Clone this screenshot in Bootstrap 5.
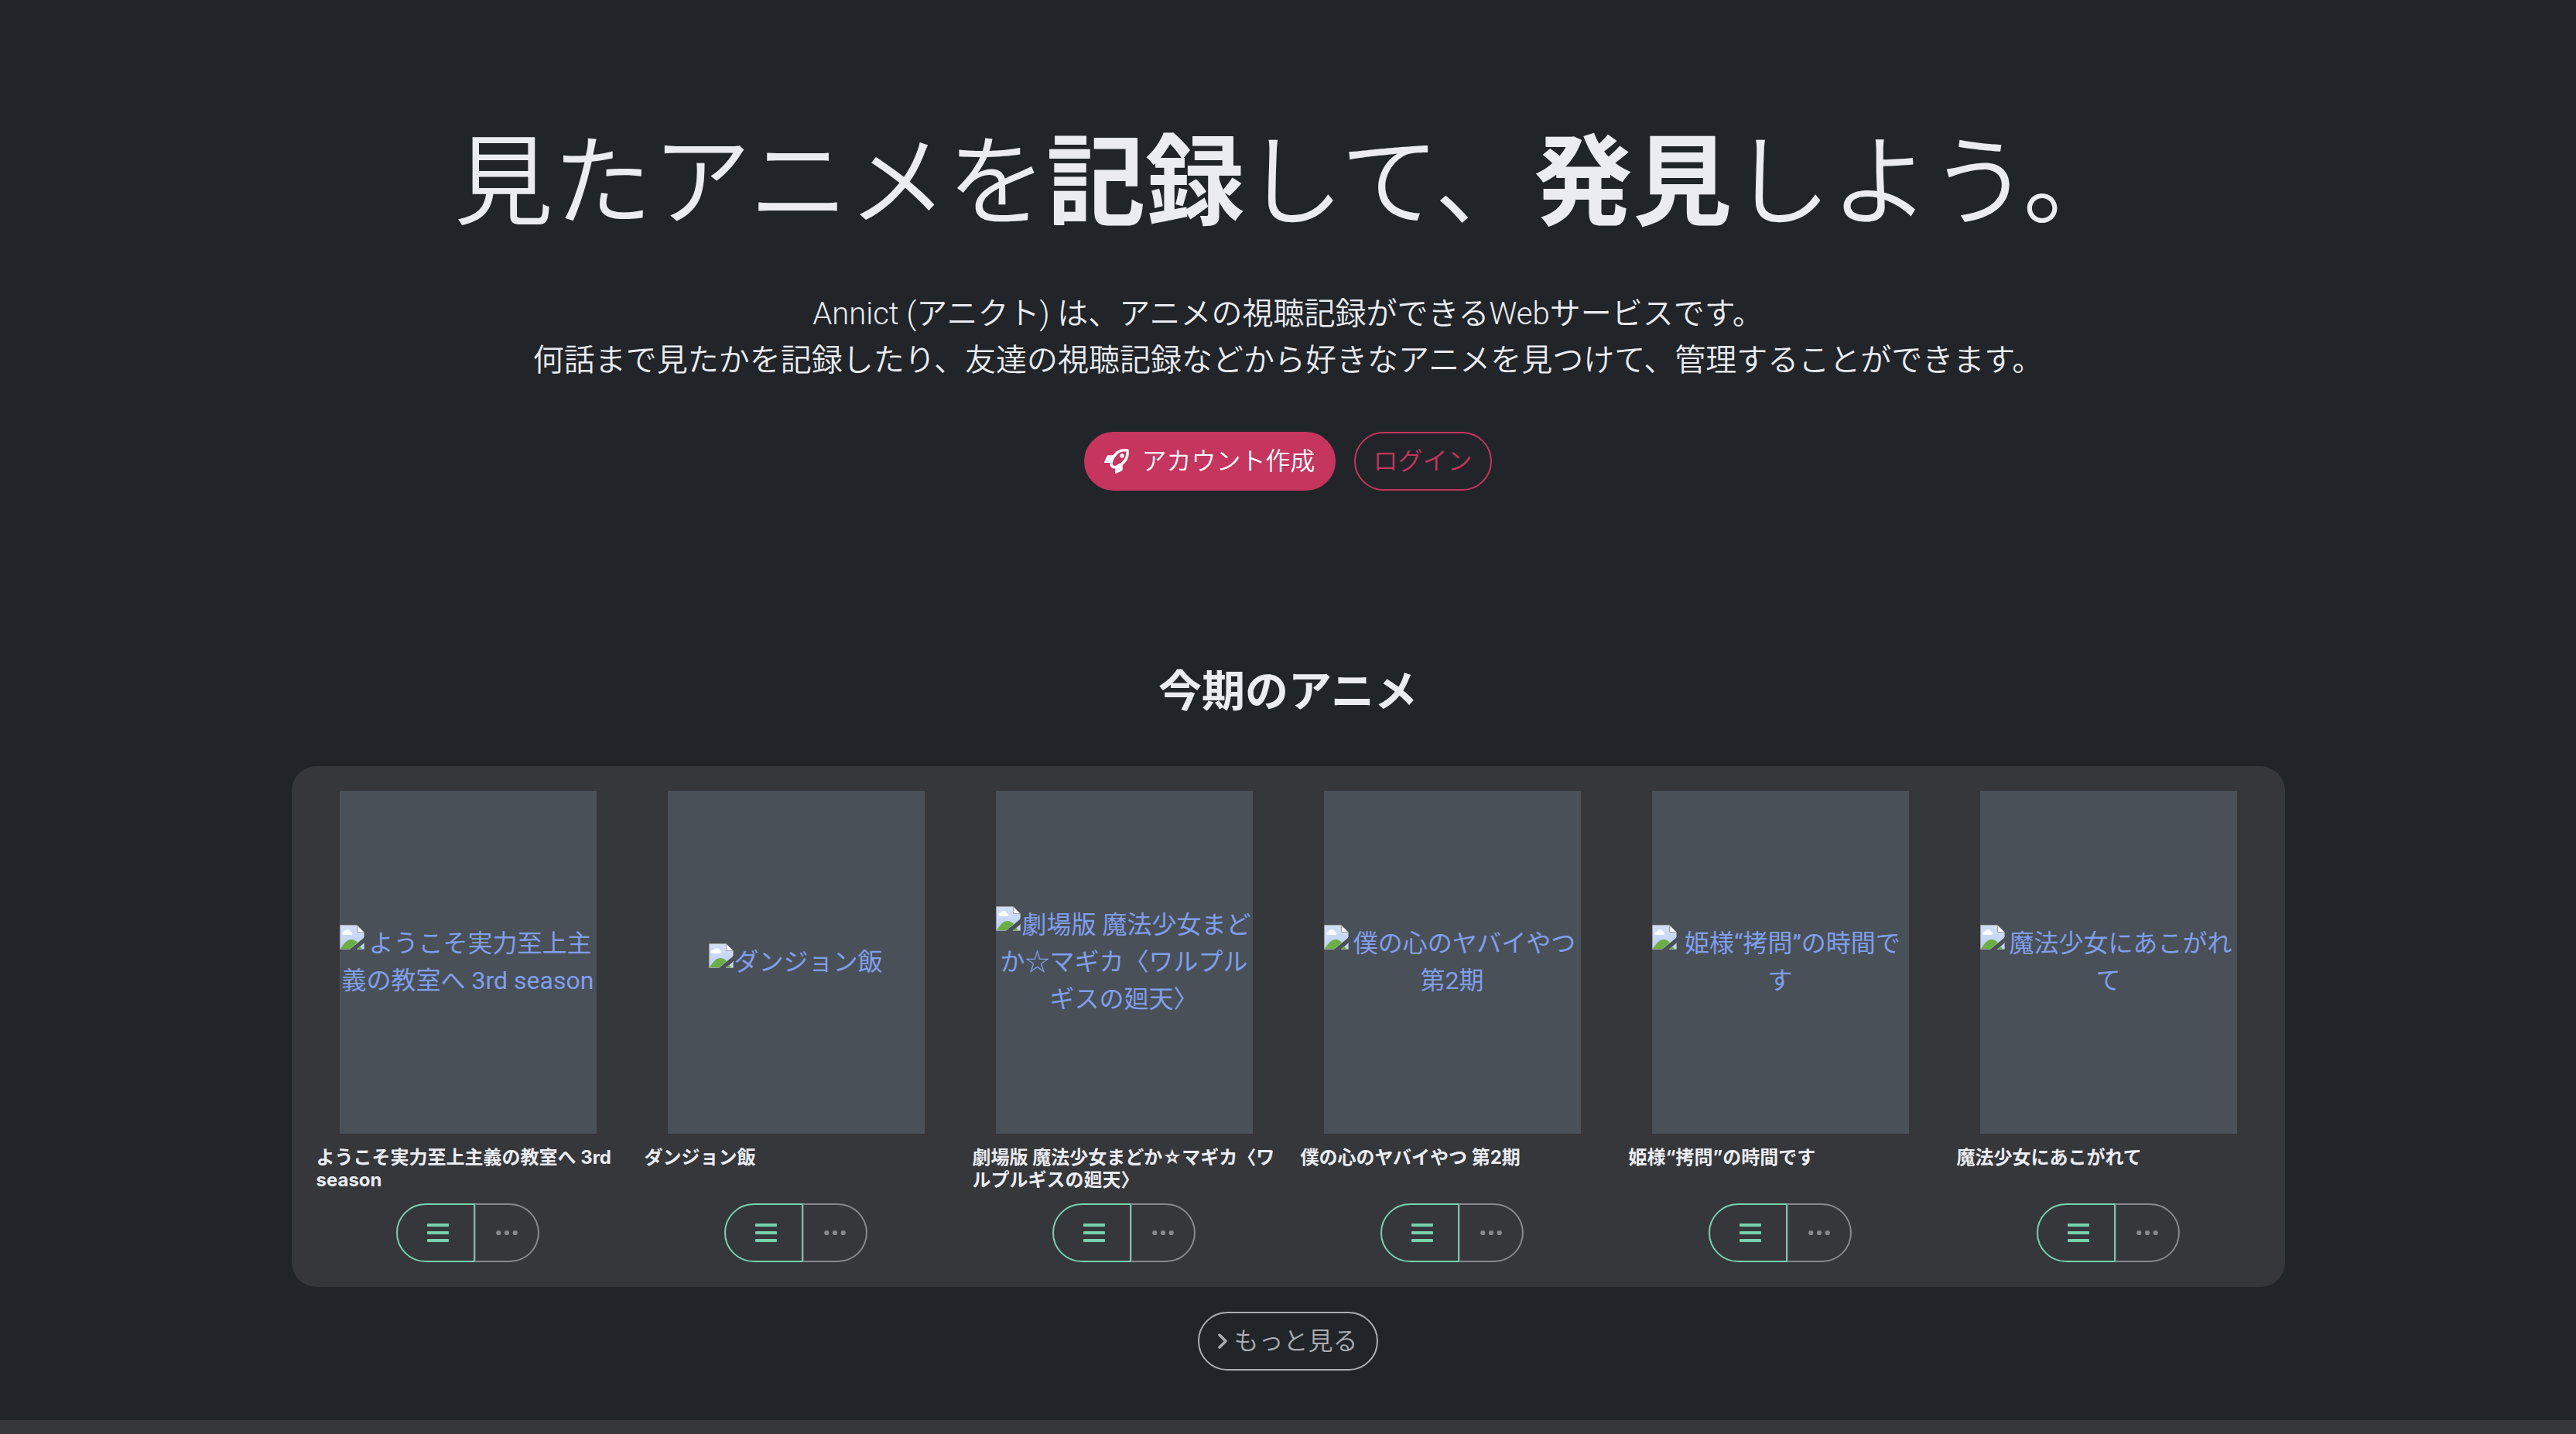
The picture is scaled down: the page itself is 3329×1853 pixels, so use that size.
<!DOCTYPE html>
<html lang="ja">
<head>
<meta charset="utf-8">
<meta name="viewport" content="width=device-width, initial-scale=1">
<title>Annict</title>
<link href="https://cdn.jsdelivr.net/npm/bootstrap@5.3.0/dist/css/bootstrap.min.css" rel="stylesheet">
<style>
html { font-size: 32px; }
body { background: #212529; color: #ebecf1; font-family: Roboto, "Noto Sans CJK JP", sans-serif; line-height: 48px; }
.btn { --bs-btn-font-size: 32px; --bs-btn-padding-x: 24px; --bs-btn-padding-y: 12px; --bs-btn-border-width: 2px; --bs-btn-line-height: 48px; font-weight: 350; }
.hero { padding-top: 160px; padding-bottom: 226px; }
.hero-title { font-size: 128px; line-height: 154px; font-weight: 350; margin-bottom: 62px; }
.hero-lead { font-size: 40px; line-height: 60px; font-weight: 350; margin-bottom: 62px; }
.hero-actions { gap: 24px; }
.btn-signup { --bs-btn-color: #fff; --bs-btn-bg: #c5355d; --bs-btn-border-color: #c5355d; --bs-btn-hover-color: #fff; --bs-btn-hover-bg: #a72d4f; }
.btn-login { --bs-btn-color: #c5355d; --bs-btn-border-color: #c5355d; --bs-btn-hover-color: #fff; --bs-btn-hover-bg: #c5355d; --bs-btn-padding-x: 23px; }
.btn-more { --bs-btn-color: #abadb2; --bs-btn-border-color: #abadb2; --bs-btn-hover-color: #fff; }
.section-title { font-size: 56px; line-height: 68px; margin-bottom: 62px; }
.shell { max-width: 2640px; }
.panel { background: #36373b; border-radius: 32px; padding: 32px; }
.poster { width: 85%; max-width: 332px; aspect-ratio: 3 / 4; background: #495057; color: #809eec; text-decoration: none; }
.poster svg { float: left; width: 32px; height: 32px; }
.work-title { font-family: Inter, "Noto Sans CJK JP", sans-serif; font-size: 24px; line-height: 29px; min-height: 58px; }
.work-actions .btn { min-height: 76px; }
.btn-status { --bs-btn-color: #76d2ae; --bs-btn-border-color: #76d2ae; --bs-btn-hover-color: #fff; padding-left: 38px; padding-right: 32px; }
.work-actions .btn-options { --bs-btn-color: #88898d; --bs-btn-border-color: #88898d; --bs-btn-hover-color: #fff; --bs-btn-padding-x: 26px; margin-left: -2px; border-left-color: #88898d80; }
.more-row { padding-bottom: 64px; }
.site-footer { background: #36373b; min-height: 19px; }
</style>
<script src="https://cdn.jsdelivr.net/npm/bootstrap@5.3.0/dist/js/bootstrap.bundle.min.js" defer></script>
</head>
<body>
<svg width="0" height="0" class="position-absolute" aria-hidden="true">
  <defs>
    <linearGradient id="sky" x1="0" y1="0" x2="0" y2="1"><stop offset="0" stop-color="#d3dff9"/><stop offset="1" stop-color="#bccff4"/></linearGradient>
    <symbol id="broken" viewBox="0 0 32 32">
      <path d="M1 1H23L31 9V17L14 31H1Z" fill="url(#sky)"/>
      <path d="M1 31C6 23 10 19 15 19C18 19 20 20 23 23L14 31Z" fill="#6cad45"/>
      <path d="M5 13C2 13 3 8 6 9C8 5 13 5 14 9C17 9 17 13 15 13Z" fill="#fff"/>
      <path d="M22.500 1V9.500H31Z" fill="#fff"/>
      <path d="M31.500 16V9.500L22.500 .5H.5V31.500H13.500M22.500 1V9.500H31" fill="none" stroke="#a0a0a0"/>
      <path d="M31 24V31H23Z" fill="#c3d3f5"/><path d="M26 28L29 31H22Z" fill="#6cad45"/>
      <path d="M31.500 23V31.500H22" fill="none" stroke="#a0a0a0"/>
    </symbol>
    <symbol id="bars" viewBox="0 0 28 26">
      <path d="M1 1H27a1 1 0 0 1 1 1V4a1 1 0 0 1-1 1H1a1 1 0 0 1-1-1V2a1 1 0 0 1 1-1ZM1 11H27a1 1 0 0 1 1 1V14a1 1 0 0 1-1 1H1a1 1 0 0 1-1-1V12a1 1 0 0 1 1-1ZM1 21H27a1 1 0 0 1 1 1V24a1 1 0 0 1-1 1H1a1 1 0 0 1-1-1V22a1 1 0 0 1 1-1Z" fill="currentColor"/>
    </symbol>
    <symbol id="dots" viewBox="0 0 28 8">
      <circle cx="3.300" cy="4" r="3.100" fill="currentColor"/><circle cx="14" cy="4" r="3.100" fill="currentColor"/><circle cx="24.700" cy="4" r="3.100" fill="currentColor"/>
    </symbol>
  </defs>
</svg>

<header class="hero text-center">
  <h1 class="hero-title">見たアニメを<strong class="fw-bold">記録</strong>して、<strong class="fw-bold">発見</strong>しよう。</h1>
  <p class="hero-lead">Annict (アニクト) は、アニメの視聴記録ができるWebサービスです。<br>何話まで見たかを記録したり、友達の視聴記録などから好きなアニメを見つけて、管理することができます。</p>
  <div class="hero-actions d-flex justify-content-center">
    <a href="#" class="btn btn-signup rounded-pill d-inline-flex align-items-center"><svg class="me-2" width="32" height="32" viewBox="0 0 32 32" aria-hidden="true"><path d="M0 17L3.500 9.500Q4 8.300 5.500 8.300H12L7.500 18H1Q0 18 0 17ZM14 24.500L23.700 20V26.500Q23.700 28 22.500 28.500L15.500 31.800Q14 32 14 31Z" fill="currentColor"/><path d="M30 2C20 1 16 4 12 10.500C9 16 8 19 9.500 21.500C11 24 14 24 17 22.500C26 19 31 13 30 2Z" fill="none" stroke="currentColor" stroke-width="3.500" stroke-linejoin="round"/><circle cx="23" cy="9" r="2.700" fill="currentColor"/></svg>アカウント作成</a>
    <a href="#" class="btn btn-login rounded-pill">ログイン</a>
  </div>
</header>

<main class="container-fluid shell px-3 mx-auto">
  <h2 class="section-title fw-bold text-center">今期のアニメ</h2>
  <section class="panel" aria-label="今期のアニメ">
    <div class="row gx-3" id="works"></div>
  </section>
  <div class="more-row text-center mt-3">
    <a href="#" class="btn btn-more rounded-pill d-inline-flex align-items-center"><svg class="me-1" width="12" height="20" viewBox="0 0 12 20" aria-hidden="true"><path d="M2 2L10 10L2 18" fill="none" stroke="currentColor" stroke-width="3.500" stroke-linecap="round" stroke-linejoin="round"/></svg>もっと見る</a>
  </div>
</main>
<footer class="site-footer"></footer>

<script>
const works = ["ようこそ実力至上主義の教室へ 3rd season", "ダンジョン飯", "劇場版 魔法少女まどか☆マギカ〈ワルプルギスの廻天〉", "僕の心のヤバイやつ 第2期", "姫様“拷問”の時間です", "魔法少女にあこがれて"];
document.getElementById("works").innerHTML = works.map(t => `
  <div class="col-2 d-flex flex-column">
    <a href="#" class="poster d-flex align-items-center justify-content-center mx-auto text-center mb-2"><span><svg aria-hidden="true"><use href="#broken"/></svg>${t}</span></a>
    <div class="work-title fw-bold mb-2">${t}</div>
    <div class="work-actions btn-group mx-auto">
      <button type="button" class="btn btn-status rounded-start-pill d-flex align-items-center" aria-label="ステータス"><svg width="28" height="26"><use href="#bars"/></svg></button>
      <button type="button" class="btn btn-options rounded-end-pill d-flex align-items-center" aria-label="オプション"><svg width="28" height="8"><use href="#dots"/></svg></button>
    </div>
  </div>`).join("");
</script>
</body>
</html>
